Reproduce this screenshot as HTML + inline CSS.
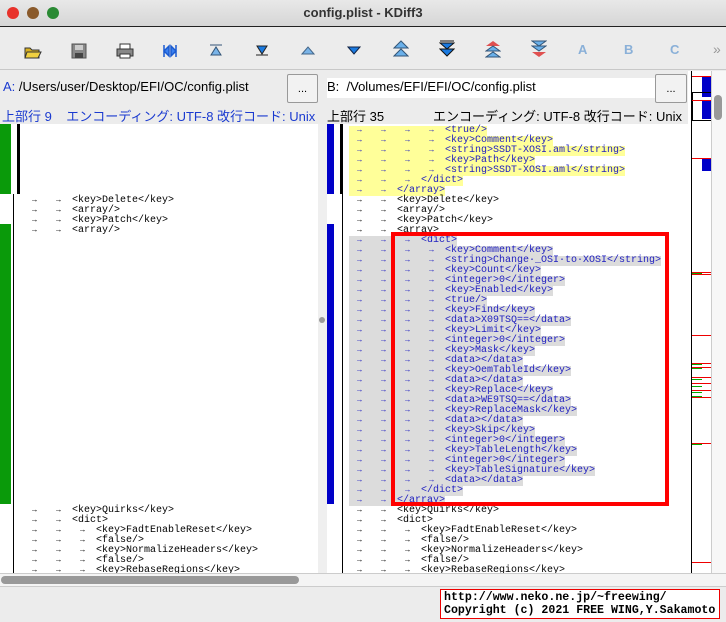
<!DOCTYPE html>
<html><head><meta charset="utf-8"><style>
*{margin:0;padding:0;box-sizing:border-box}
body{width:726px;height:622px;overflow:hidden;background:#ececec;font-family:"Liberation Sans","Noto Sans CJK JP",sans-serif;position:relative}
.abs{position:absolute}
#title{left:0;top:0;width:726px;height:27px;background:linear-gradient(#e8e8e8,#d6d6d6);border-bottom:1px solid #222;text-align:center;font-size:13px;font-weight:bold;line-height:26px;color:#333}
.dot{position:absolute;top:7px;width:12px;height:12px;border-radius:50%}
#tb{left:0;top:27px;width:726px;height:43px;background:#ececec;border-bottom:1px solid #c8c8c8}
.ic{position:absolute;top:16px}
.pane{background:#fff;overflow:hidden}
.ln{position:absolute;height:10px;font:10px/10px "Liberation Mono",monospace;white-space:pre;color:#000}
.ln span.b{display:inline-block;height:10px}
.t{display:inline-block;width:24px;font-size:8px;padding-left:8px;font-weight:bold}
.y{background:#ffff99;color:#2020c0}
.g{background:#dcdcdc;color:#2020c0}
.btn{border:1px solid #999;background:#f2f2f2;font-size:11px;text-align:center;border-radius:2px}
</style></head><body>
<div id="title" class="abs">config.plist - KDiff3
<div class="dot" style="left:7px;background:#e8322b"></div>
<div class="dot" style="left:27px;background:#8a5a2b"></div>
<div class="dot" style="left:47px;background:#2a8a34"></div>
</div>
<div id="tb" class="abs">
<svg class="ic" style="left:24px" width="18" height="16"><path d="M1 5h5l2 2h7v8H1z" fill="#d8b020" stroke="#333"/><path d="M3 9h14l-3 6H1z" fill="#f0d040" stroke="#333"/></svg>
<svg class="ic" style="left:71px" width="16" height="16"><rect x="1" y="1" width="14" height="14" fill="#888" stroke="#555"/><rect x="4" y="2" width="8" height="5" fill="#ccc"/><rect x="4" y="10" width="8" height="5" fill="#444"/></svg>
<svg class="ic" style="left:116px" width="18" height="16"><rect x="4" y="1" width="10" height="6" fill="#fff" stroke="#333"/><rect x="1" y="6" width="16" height="7" fill="#888" stroke="#333"/><rect x="4" y="11" width="10" height="4" fill="#fff" stroke="#333"/></svg>
<svg class="ic" style="left:162px" width="16" height="16"><path d="M2 2v12M14 2v12M2 8l5-5v10zM14 8l-5-5v10z" stroke="#1a5ad0" fill="#3a80f0" stroke-width="1.5"/></svg>
<svg class="ic" style="left:209px" width="14" height="14"><path d="M1 2h12M2 12l5-8 5 8z" stroke="#357" fill="#7ab4e8"/></svg>
<svg class="ic" style="left:255px" width="14" height="14"><path d="M1 12h12M2 3h10l-5 8z" stroke="#222" fill="#1a7ae0"/></svg>
<svg class="ic" style="left:301px" width="14" height="14"><path d="M1 11l6-7 6 7z" fill="#7ab4e8" stroke="#468"/></svg>
<svg class="ic" style="left:347px" width="14" height="14"><path d="M1 4h12l-6 7z" fill="#1a7ae0" stroke="#124"/></svg>
<svg class="ic" style="left:393px;top:13px" width="16" height="18"><path d="M1 8l7-7 7 7zM1 16l7-7 7 7z" fill="#6ab0ea" stroke="#357"/></svg>
<svg class="ic" style="left:439px;top:13px" width="16" height="18"><path d="M1 1h14M1 3h14l-7 6zM1 9h14l-7 7z" fill="#1a7ae0" stroke="#111"/></svg>
<svg class="ic" style="left:485px;top:13px" width="16" height="18"><path d="M1 6l7-5 7 5z" fill="#e05050"/><path d="M1 11l7-5 7 5zM1 17l7-5 7 5z" fill="#6ab0ea" stroke="#357"/></svg>
<svg class="ic" style="left:531px;top:13px" width="16" height="18"><path d="M1 1h14l-7 5zM1 6h14l-7 5z" fill="#6ab0ea" stroke="#357"/><path d="M1 12h14l-7 5z" fill="#e05050"/></svg>
<div class="abs" style="left:578px;top:15px;font:bold 13px 'Liberation Sans';color:#8ab0d8">A</div>
<div class="abs" style="left:624px;top:15px;font:bold 13px 'Liberation Sans';color:#8ab0d8">B</div>
<div class="abs" style="left:670px;top:15px;font:bold 13px 'Liberation Sans';color:#8ab0d8">C</div>
<div class="abs" style="left:713px;top:14px;font-size:14px;color:#999">»</div>
</div>
<!-- path rows -->
<div class="abs" style="left:0;top:71px;width:688px;height:52px;background:#ececec"></div>
<div class="abs" style="left:3px;top:79px;font-size:13px;color:#000"><span style="color:#1a3ad0">A:</span> /Users/user/Desktop/EFI/OC/config.plist</div>
<div class="abs btn" style="left:287px;top:74px;width:31px;height:29px;line-height:28px">...</div>
<div class="abs" style="left:327px;top:78px;width:328px;height:20px;background:#fff"></div>
<div class="abs" style="left:327px;top:79px;font-size:13px">B: &nbsp;/Volumes/EFI/EFI/OC/config.plist</div>
<div class="abs btn" style="left:655px;top:74px;width:32px;height:29px;line-height:28px">...</div>
<div class="abs" style="left:2px;top:106px;font-size:13px;color:#1a3ad0;white-space:nowrap">上部行 9 &nbsp;&nbsp;&nbsp;エンコーディング: UTF-8 改行コード: Unix</div>
<div class="abs" style="left:327px;top:106px;font-size:13px;color:#000">上部行 35</div>
<div class="abs" style="left:682px;top:106px;font-size:13px;color:#000;white-space:nowrap;transform:translateX(-100%)">エンコーディング: UTF-8 改行コード: Unix</div>
<!-- panes -->
<div class="abs pane" style="left:0;top:124px;width:318px;height:449px">
<div class="abs" style="left:0;top:0;width:11px;height:70px;background:#0a9a0a"></div>
<div class="abs" style="left:0;top:100px;width:11px;height:280px;background:#0a9a0a"></div>
<div class="abs" style="left:17px;top:0;width:3px;height:70px;background:#000"></div>
<div class="abs" style="left:13px;top:70px;width:1px;height:380px;background:#000"></div>
</div>
<div class="abs" style="left:318px;top:124px;width:9px;height:449px;background:#efefef"><div class="abs" style="left:1px;top:193px;width:6px;height:6px;border-radius:50%;background:#999"></div></div>
<div class="abs pane" style="left:327px;top:124px;width:361px;height:449px">
<div class="abs" style="left:0;top:0;width:7px;height:70px;background:#0000c8"></div>
<div class="abs" style="left:0;top:100px;width:7px;height:280px;background:#0000c8"></div>
<div class="abs" style="left:13px;top:0;width:3px;height:70px;background:#000"></div>
<div class="abs" style="left:15px;top:70px;width:1px;height:380px;background:#000"></div>
</div>
<div id="L"></div><div id="R"></div>
<div class="abs" style="left:391px;top:232px;width:278px;height:274px;border:4px solid #f00"></div>
<!-- overview -->
<div class="abs" style="left:688px;top:71px;width:23px;height:502px;background:#fff"></div>
<div class="abs" style="left:691px;top:71px;width:1px;height:502px;background:#000"></div>
<div class="abs" style="left:702px;top:77px;width:9px;height:20px;background:#0000c8"></div>
<div class="abs" style="left:702px;top:101px;width:9px;height:18px;background:#0000c8"></div>
<div class="abs" style="left:702px;top:159px;width:9px;height:12px;background:#0000c8"></div>
<div class="abs" style="left:692px;top:92px;width:20px;height:29px;border:1px solid #000;border-right:none"></div>
<div id="ov"></div>
<div class="abs" style="left:711px;top:71px;width:15px;height:502px;background:#f7f7f7;border-left:1px solid #ccc"></div>
<div class="abs" style="left:714px;top:95px;width:8px;height:25px;border-radius:4px;background:#999"></div>
<div class="abs" style="left:0;top:573px;width:726px;height:14px;background:#f4f4f4;border-top:1px solid #ccc;border-bottom:1px solid #ccc"></div>
<div class="abs" style="left:1px;top:576px;width:298px;height:8px;border-radius:4px;background:#999"></div>
<div class="abs" style="left:440px;top:589px;width:280px;height:30px;background:#fff;border:1px solid #e00;font:bold 11.6px/13px 'Liberation Mono',monospace;padding:1px 0 0 3px;white-space:pre;overflow:hidden">http://www.neko.ne.jp/~freewing/
Copyright (c) 2021 FREE WING,Y.Sakamoto</div>
<script>
var A='→';
function tabs(n,c){var s='';for(var i=0;i<n;i++)s+='<span class="t" style="color:'+c+'">'+A+'</span>';return s}
function esc(s){return s.replace(/&/g,'&amp;').replace(/</g,'&lt;').replace(/>/g,'&gt;')}
var R=[[4,'<true/>','y'],[4,'<key>Comment</key>','y'],[4,'<string>SSDT-XOSI.aml</string>','y'],[4,'<key>Path</key>','y'],[4,'<string>SSDT-XOSI.aml</string>','y'],[3,'</dict>','y'],[2,'</array>','y'],
[2,'<key>Delete</key>',''],[2,'<array/>',''],[2,'<key>Patch</key>',''],[2,'<array>',''],[3,'<dict>','g']];
['<key>Comment</key>','<string>Change·_OSI·to·XOSI</string>','<key>Count</key>','<integer>0</integer>','<key>Enabled</key>','<true/>','<key>Find</key>','<data>X09TSQ==</data>','<key>Limit</key>','<integer>0</integer>','<key>Mask</key>','<data></data>','<key>OemTableId</key>','<data></data>','<key>Replace</key>','<data>WE9TSQ==</data>','<key>ReplaceMask</key>','<data></data>','<key>Skip</key>','<integer>0</integer>','<key>TableLength</key>','<integer>0</integer>','<key>TableSignature</key>','<data></data>'].forEach(function(s){R.push([4,s,'g'])});
R.push([3,'</dict>','g'],[2,'</array>','g']);
var tail=[[2,'<key>Quirks</key>'],[2,'<dict>'],[3,'<key>FadtEnableReset</key>'],[3,'<false/>'],[3,'<key>NormalizeHeaders</key>'],[3,'<false/>'],[3,'<key>RebaseRegions</key>']];
tail.forEach(function(t){R.push([t[0],t[1],''])});
var h='';
R.forEach(function(r,i){var y=124+i*10;if(y>565)return;
h+='<div class="ln" style="left:349px;top:'+(y+2)+'px"><span class="b '+r[2]+'">'+tabs(r[0],r[2]?'#2020c0':'#000')+esc(r[1])+'</span></div>';});
var Lh='';
var Ll=[[7,'<key>Delete</key>'],[8,'<array/>'],[9,'<key>Patch</key>'],[10,'<array/>']];
Ll.forEach(function(l){Lh+='<div class="ln" style="left:24px;top:'+(126+l[0]*10)+'px">'+tabs(2,'#000')+esc(l[1])+'</div>'});
tail.forEach(function(t,i){Lh+='<div class="ln" style="left:24px;top:'+(506+i*10)+'px">'+tabs(t[0],'#000')+esc(t[1])+'</div>'});
document.getElementById('R').innerHTML=h;document.getElementById('L').innerHTML=Lh;
var ov='';[76,100,158,272,274,335,363,367,377,383,390,397,443,562].forEach(function(y){ov+='<div class="abs" style="left:692px;top:'+y+'px;width:19px;height:1px;background:#e00"></div>'});
[273,364,368,379,386,392,396,444].forEach(function(y){ov+='<div class="abs" style="left:692px;top:'+y+'px;width:10px;height:1px;background:#0a0"></div>'});
document.getElementById('ov').innerHTML=ov;
</script>
</body></html>
